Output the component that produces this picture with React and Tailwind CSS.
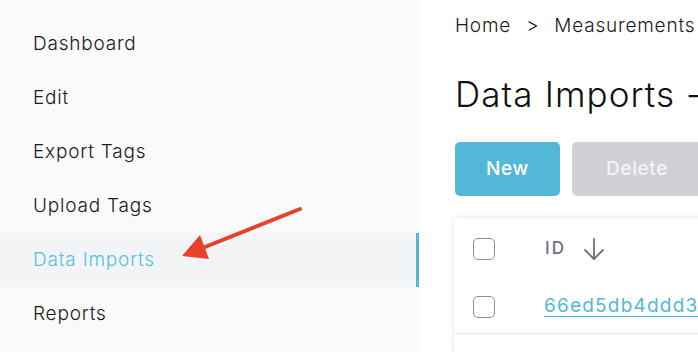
import React from "react";

const items = ["Dashboard", "Edit", "Export Tags", "Upload Tags", "Data Imports", "Reports"];

function Checkbox() {
  return <div className="w-[22px] h-[22px] rounded-[5px] border-[1.5px] border-[#8b909a] bg-white shrink-0" />;
}

export default function App() {
  return (
    <div className="w-[698px] h-[352px] overflow-hidden flex bg-white text-[#1a1a1a]" style={{ fontFamily: "Inter, 'Noto Sans', sans-serif" }}>
      <aside className="w-[419px] shrink-0 bg-[#fafafa] pt-[17px] relative">
        {items.map((it) => {
          const active = it === "Data Imports";
          return (
            <div
              key={it}
              className={
                "h-[54px] flex items-center pl-[33px] text-[19px] tracking-[0.8px] font-[350] " +
                (active ? "bg-[#f3f4f6] text-[#5bbfe0] border-r-[3px] border-[#53b7d8]" : "text-[#1a1a1a]")
              }
            >
              {it}
            </div>
          );
        })}
        <svg className="absolute left-0 top-0" width="419" height="352" viewBox="0 0 419 352">
          <line x1="300" y1="209" x2="200" y2="249" stroke="#e8412c" strokeWidth="4" strokeLinecap="round" />
          <polygon points="182,256 200,235 209,259" fill="#e8412c" />
        </svg>
      </aside>
      <main className="flex-1 min-w-0 pl-[36px] overflow-hidden">
        <div className="pt-[13px] h-[26px] box-content flex items-center gap-[15px] text-[19px] tracking-[0.8px] font-[350] whitespace-nowrap text-[#1a1a1a]">
          <span>Home</span>
          <span>&gt;</span>
          <span>Measurements</span>
        </div>
        <h1 className="mt-[33px] text-[35px] leading-[44px] font-light tracking-[1.1px] whitespace-nowrap text-[#111]">Data Imports -</h1>
        <div className="mt-[26px] flex gap-[12px] whitespace-nowrap">
          <button className="w-[105px] h-[54px] rounded-[5px] bg-[#53b7d8] text-white text-[19px] font-medium tracking-[0.6px] shrink-0">New</button>
          <button className="w-[130px] h-[54px] rounded-[5px] bg-[#d0d1d5] text-[#f4f4f6] text-[19px] font-medium tracking-[0.6px] shrink-0">Delete</button>
        </div>
        <div className="mt-[22px] ml-[-1px] bg-white shadow-[0_0_6px_rgba(0,0,0,0.12)] w-[400px]">
          <div className="h-[62px] flex items-center pl-[19px]">
            <Checkbox />
            <div className="ml-[50px] flex items-center gap-[17px] text-[#6b7280]">
              <span className="text-[17px] tracking-[2px] font-medium">ID</span>
              <svg width="22" height="24" viewBox="0 0 22 24" fill="none" stroke="#6b7280" strokeWidth="1.8" strokeLinecap="round" strokeLinejoin="round">
                <line x1="11" y1="2" x2="11" y2="22" />
                <polyline points="2,13 11,22 20,13" />
              </svg>
            </div>
          </div>
          <div className="h-[54px] flex items-center pl-[19px] border-b border-[#e5e7eb]">
            <Checkbox />
            <a className="ml-[49px] text-[19px] tracking-[1.2px] text-[#53b7d8] underline underline-offset-[4px] whitespace-nowrap">66ed5db4ddd3</a>
          </div>
          <div className="h-[20px]" />
        </div>
      </main>
    </div>
  );
}
